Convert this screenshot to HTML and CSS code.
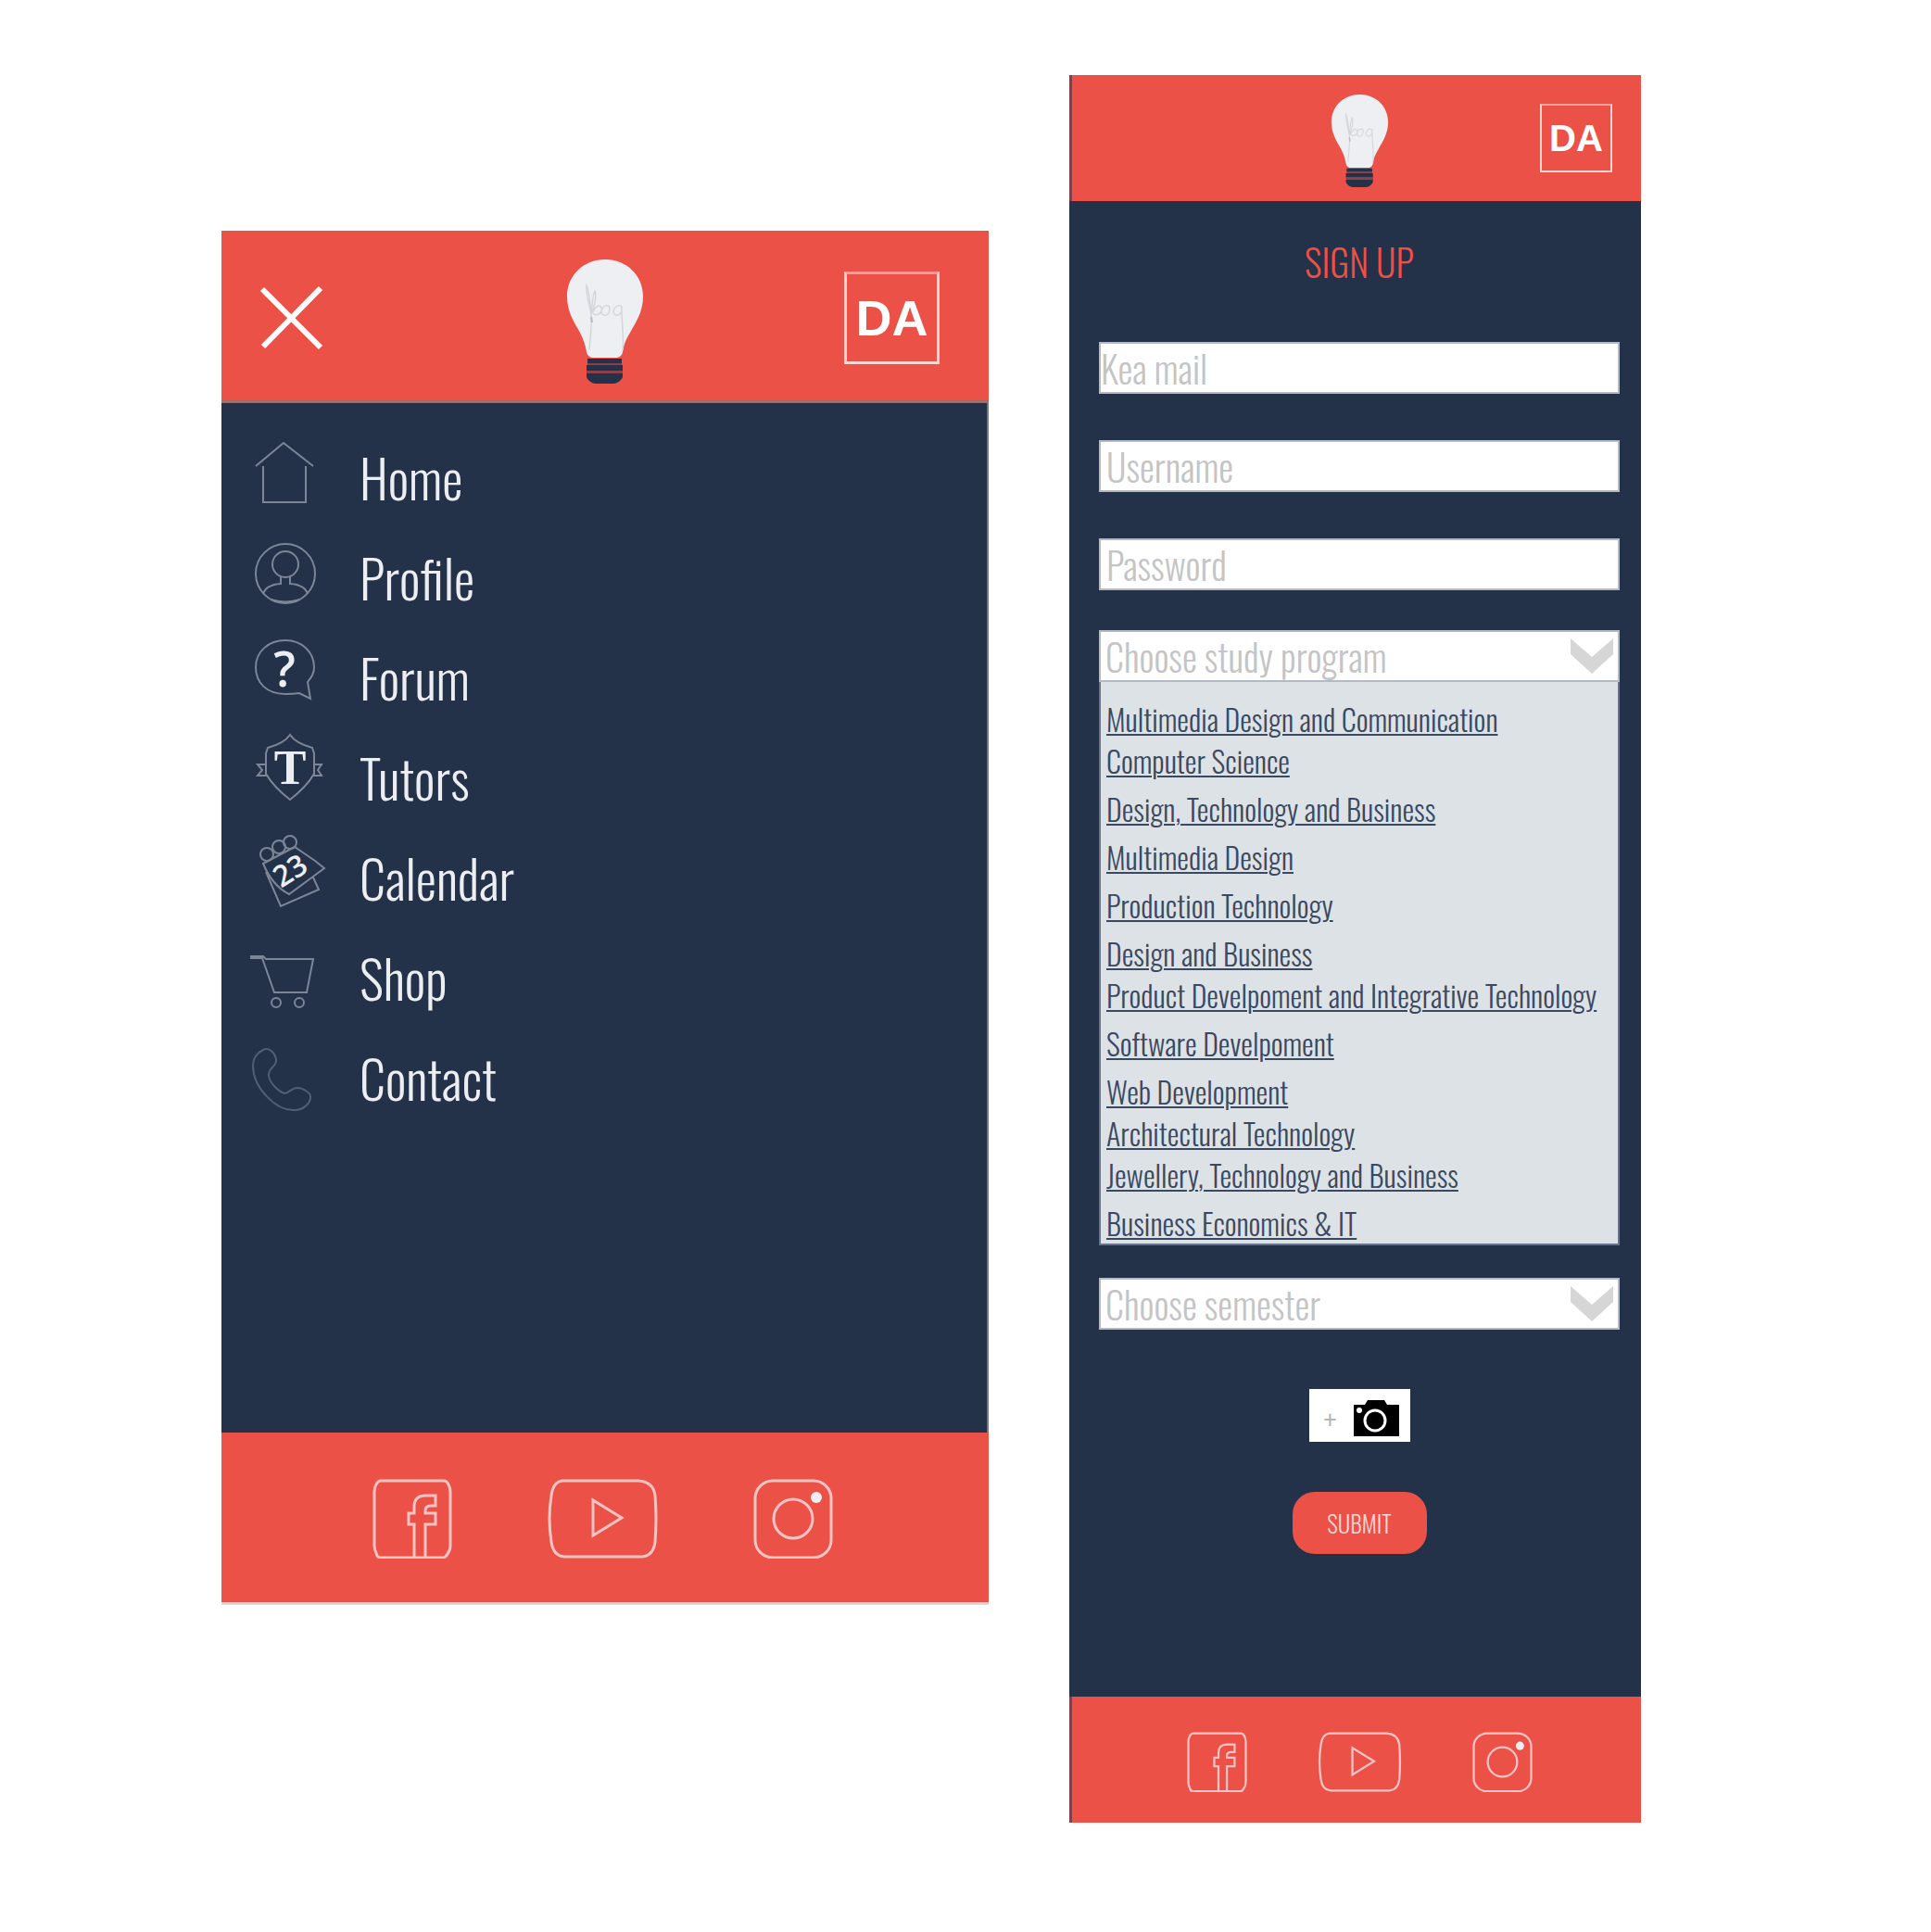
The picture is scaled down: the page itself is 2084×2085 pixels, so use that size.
FILE: index.html
```html
<!DOCTYPE html>
<html lang="en">
<head>
<meta charset="utf-8">
<meta name="viewport" content="width=device-width, initial-scale=1">
<title>Kea app</title>
<link rel="stylesheet" href="styles.css">
</head>
<body>
<svg class="sprite" aria-hidden="true">
  <symbol id="bulb" viewBox="0 0 84 134">
    <path fill="#eeeff3" d="M42 0C65 0 83 17 83 40c0 17-8 28-14 39-5 8-7 14-8 21-1 4-4 6-8 6H30c-4 0-7-2-8-6-1-7-3-13-7-21C9 68 1 57 1 40 1 17 19 0 42 0z"/>
    <path fill="none" stroke="#d3d7dd" stroke-width="1.5" d="M25 98c1-16 3-26 2-38-1-10-6-22-5-32 3 6 4 20 5 32 1-8 1-20 4-26 2 4 0 14-3 24 4-8 8-10 10-6 2 6-6 10-9 6m9-2c2-8 10-8 9-2-1 8-9 8-9 2m13 0c2-8 10-8 9-2-1 8-9 8-9 2m9-6c-1 12 3 34 1 48"/>
    <path fill="none" stroke="#b4bbc4" stroke-width="2" d="M27 62l1 6"/>
    <path fill="#233149" d="M23 107h37v5H23zM22 114h39v6H22zM22 123h39v4c-2 4-6 7-10 7H32c-4 0-8-3-10-7z"/>
    <path fill="#8c3f49" d="M23 112h37v2H23zM22 120h39v3H22z"/>
  </symbol>
  <symbol id="facebook" viewBox="0 0 86 86">
    <path d="M9 2h68q3 0 5 4 2 4 2 8v58q0 5-3 9-2 4-5 4H9q-4 0-5-5-2-4-2-8V14q0-5 2-8 2-4 5-4z"/>
    <path d="M45 84V49h-6V37h6v-7q0-12 12-12h11v11h-5q-6 0-6 5v3h11v12H57v35"/>
  </symbol>
  <symbol id="youtube" viewBox="0 0 119 86">
    <path d="M16 2h82q16 1 18 16 2 25 0 50-2 15-14 16H18Q6 83 4 68 0 43 4 18 6 3 16 2z"/>
    <path d="M49 23v38l31-19z"/>
  </symbol>
  <symbol id="instagram" viewBox="0 0 86 86">
    <rect x="2" y="2" width="82" height="83" rx="19"/>
    <circle cx="43" cy="43" r="21"/>
    <circle class="dot" cx="68" cy="20" r="6"/>
  </symbol>
  <symbol id="chevron" viewBox="0 0 46 38">
    <path fill="#d6d6d6" d="M0 0l23 20L46 0v17L23 38 0 17z"/>
  </symbol>
</svg>

<main class="board">
  <section class="screen screen-menu" aria-label="Menu">
    <header class="bar bar-top">
      <button class="close" type="button" aria-label="Close menu">
        <svg viewBox="0 0 68 68"><path d="M2 3l63 63M65 2L3 65"/></svg>
      </button>
      <svg class="bulb" role="img" aria-label="Kea"><use href="#bulb"/></svg>
      <a class="badge" href="#">DA</a>
    </header>
    <nav class="nav">
      <a class="nav-item" href="#">
        <svg viewBox="0 0 84 84"><path d="M6 30L36 5l32 25M14 30v39h46V30"/></svg>Home</a>
      <a class="nav-item" href="#">
        <svg viewBox="0 0 84 84"><circle cx="38" cy="38" r="32"/><circle cx="38" cy="28" r="14"/><path d="M33 41v8q-16 1-19 11M43 41v8q16 1 19 11M22 66q16 5 32 0"/></svg>Profile</a>
      <a class="nav-item" href="#">
        <svg viewBox="0 0 84 84"><path d="M38 2c18 0 31 13 31 29 0 7-3 11-7 16l3 18-12-6q-7 1-15 1C18 60 6 48 6 31S20 2 38 2z"/><text class="mark mark-q" x="37" y="52">?</text></svg>Forum</a>
      <a class="nav-item" href="#">
        <svg viewBox="0 0 84 84"><path d="M43-4q-6 9-24 14l-2 6v22q8 14 26 28 18-14 26-28V16l-2-6Q49 5 43-4zM17 28H8l5 6-5 6h10M69 28h8l-4 6 4 6h-9"/><text class="mark mark-t" x="43" y="49">T</text></svg>Tutors</a>
      <a class="nav-item" href="#">
        <svg viewBox="0 0 84 84"><path d="M14 27L48 9l22 15 10 8-38 28q-18-9-28-33zM17 36l16 37 41-18-6-13"/><circle cx="18" cy="17" r="7"/><circle cx="31" cy="9" r="7"/><circle cx="43" cy="4" r="7"/><text class="mark mark-n" x="49" y="44" transform="rotate(-32 49 44)">23</text></svg>Calendar</a>
      <a class="nav-item" href="#">
        <svg viewBox="0 0 84 84"><path d="M1 19h13l3 3h51l-7 36H26L13 21H1z"/><circle cx="28" cy="69" r="5"/><circle cx="53" cy="69" r="5"/></svg>Shop</a>
      <a class="nav-item nav-faint" href="#">
        <svg viewBox="0 0 84 84"><path d="M14 12c8-4 14 6 14 12s-9 8-8 16c1 7 9 16 17 19 5 0 7-6 14-6 6 0 15 6 14 10 0 7-8 14-17 14C28 78 3 53 3 29c0-8 5-14 11-17z"/></svg>Contact</a>
    </nav>
    <footer class="bar bar-social">
      <a href="#" aria-label="Facebook"><svg class="social"><use href="#facebook"/></svg></a>
      <a href="#" aria-label="YouTube"><svg class="social social-wide"><use href="#youtube"/></svg></a>
      <a href="#" aria-label="Instagram"><svg class="social"><use href="#instagram"/></svg></a>
    </footer>
  </section>

  <section class="screen screen-signup" aria-label="Sign up">
    <header class="bar bar-top">
      <span></span>
      <svg class="bulb" role="img" aria-label="Kea"><use href="#bulb"/></svg>
      <a class="badge" href="#">DA</a>
    </header>
    <form class="form">
      <h1 class="title">SIGN UP</h1>
      <input class="field field-mail" type="email" placeholder="Kea mail" aria-label="Kea mail">
      <input class="field" type="text" placeholder="Username" aria-label="Username">
      <input class="field" type="password" placeholder="Password" aria-label="Password">
      <div class="program">
        <div class="pick">
          <select class="field" aria-label="Study program"><option>Choose study program</option></select>
          <svg class="chevron" aria-hidden="true"><use href="#chevron"/></svg>
        </div>
        <ul class="options">
          <li><a href="#">Multimedia Design and Communication</a></li>
          <li class="tight"><a href="#">Computer Science</a></li>
          <li><a href="#">Design, Technology and Business</a></li>
          <li><a href="#">Multimedia Design</a></li>
          <li><a href="#">Production Technology</a></li>
          <li><a href="#">Design and Business</a></li>
          <li class="tight"><a href="#">Product Develpoment and Integrative Technology</a></li>
          <li><a href="#">Software Develpoment</a></li>
          <li><a href="#">Web Development</a></li>
          <li class="tight"><a href="#">Architectural Technology</a></li>
          <li class="tight"><a href="#">Jewellery, Technology and Business</a></li>
          <li><a href="#">Business Economics &amp; IT</a></li>
        </ul>
      </div>
      <div class="pick pick-semester">
        <select class="field" aria-label="Semester"><option>Choose semester</option></select>
        <svg class="chevron" aria-hidden="true"><use href="#chevron"/></svg>
      </div>
      <button class="photo" type="button" aria-label="Add photo">
        <span>+</span>
        <svg viewBox="0 0 49 40"><path d="M0 5h12l3-5h18l3 5h13v34H0z"/><circle cx="23" cy="22" r="11"/><circle class="flash" cx="6" cy="11" r="3"/></svg>
      </button>
      <button class="submit" type="submit">SUBMIT</button>
    </form>
    <footer class="bar bar-social">
      <a href="#" aria-label="Facebook"><svg class="social"><use href="#facebook"/></svg></a>
      <a href="#" aria-label="YouTube"><svg class="social social-wide"><use href="#youtube"/></svg></a>
      <a href="#" aria-label="Instagram"><svg class="social"><use href="#instagram"/></svg></a>
    </footer>
  </section>
</main>
</body>
</html>
```
FILE: styles.css
```css
:root {
  --red: #eb5147;
  --navy: #233149;
  --light: #eceef2;
  --grey: #c4c4c4;
}

* { box-sizing: border-box; }

body {
  margin: 0;
  background: #fff;
  font-family: "Oswald Light", Oswald, "Liberation Sans Narrow", "Open Sans Condensed", "Roboto Condensed", "Liberation Sans", sans-serif;
  font-weight: 300;
}

a { color: inherit; text-decoration: none; }
svg { display: block; overflow: visible; }
button { border: 0; padding: 0; font: inherit; cursor: pointer; }

.sprite { position: absolute; width: 0; height: 0; }

.board {
  display: grid;
  grid-template-columns: 828fr 617fr;
  align-items: start;
  gap: 87px;
  padding: 81px 313px 118px 239px;
}

.screen { background: var(--navy); }
.screen-menu { margin-top: 168px; }

/* Bars */
.bar { background: var(--red); }

.bar-top {
  display: grid;
  grid-template-columns: 1fr auto 1fr;
  align-items: center;
}

.bar-social {
  display: flex;
  justify-content: center;
  align-items: center;
}

.screen-menu .bar-top { height: 186px; padding-top: 4px; border-bottom: 3px solid #99706e; }
.screen-menu .bar-social { height: 186px; padding: 2px 6px 0 0; gap: 103px; border-bottom: 3px solid #d8d8d8; }
.screen-signup .bar-top { height: 136px; padding-left: 7px; border-left: 3px solid #84404a; }
.screen-signup .bar-social { height: 136px; padding: 4px 0 0 6px; gap: 76px; border-left: 3px solid #84404a; }

.close { margin-left: 42px; width: 68px; background: none; }
.close path { fill: none; stroke: #fff; stroke-width: 6; }

.bulb { width: 84px; height: 134px; margin-top: 8px; }
.screen-signup .bulb { width: 63px; height: 100px; margin-top: 6px; }

.badge {
  justify-self: end;
  display: grid;
  place-items: center;
  width: 103px;
  height: 100px;
  margin-right: 53px;
  border: 3px solid #fbd5d2;
  border-top-color: #f5a09a;
  color: #fff;
  font: bold 54px/1 "Liberation Sans", sans-serif;
}

.screen-signup .badge {
  width: 78px;
  height: 74px;
  margin-right: 31px;
  border-width: 2px;
  font-size: 40px;
}

.social {
  width: 86px;
  height: 86px;
  fill: none;
  stroke: #f3c4c3;
  stroke-width: 3;
}
.social-wide { width: 119px; }
.screen-signup .social { width: 65px; height: 65px; }
.screen-signup .social-wide { width: 91px; }
.dot { fill: var(--light); stroke: none; }

/* Menu */
.nav {
  display: flex;
  flex-direction: column;
  padding: 26px 0 329px 31px;
  border-right: 2px solid #73777d;
}

.nav-item {
  display: flex;
  align-items: center;
  gap: 34px;
  height: 108px;
  color: var(--light);
  font-size: 56px;
  line-height: 60px;
}

.nav-item svg {
  width: 84px;
  height: 84px;
  fill: none;
  stroke: #7c8696;
  stroke-width: 2;
}
.nav-faint svg { stroke: #525e71; }

.nav-item .mark { fill: var(--light); stroke: none; text-anchor: middle; font-weight: 600; }
.mark-q { font-family: "Open Sans", sans-serif; font-size: 52px; }
.mark-t { font-family: "Liberation Serif", serif; font-size: 52px; }
.mark-n { font-family: "Open Sans", sans-serif; font-size: 32px; }

/* Sign up */
.form {
  display: flex;
  flex-direction: column;
  align-items: center;
  padding: 40px 23px 154px 32px;
}

.title {
  margin: 0 0 62px;
  color: var(--red);
  font-size: 40px;
  font-weight: 300;
  line-height: 50px;
}

.field {
  appearance: none;
  width: 100%;
  height: 56px;
  margin: 0 0 50px;
  padding: 0 6px;
  border: 2px solid #b4bac4;
  border-radius: 0;
  background: #fff;
  color: var(--grey);
  font: inherit;
  font-size: 40px;
  line-height: 52px;
}
.field-mail { padding: 0; }
.field::placeholder { color: var(--grey); opacity: 1; }

.program { width: 100%; margin-top: -7px; }

.pick { display: grid; align-items: center; width: 100%; }
.pick .field { grid-area: 1 / 1; margin: 0; padding: 0 5px; }
.pick .chevron {
  grid-area: 1 / 1;
  justify-self: end;
  width: 46px;
  height: 38px;
  margin-right: 7px;
  pointer-events: none;
}
.pick-semester { margin: 35px 0 64px; }

.options {
  margin: 0;
  padding: 10px 6px 0;
  border: 2px solid #66738a;
  border-top: 0;
  background: #dde2e6;
  color: #3a4860;
  font-size: 32px;
  line-height: 45px;
  list-style: none;
}
.options li { margin-top: 7px; white-space: nowrap; }
.options .tight { margin-top: 0; }
.options a {
  text-decoration: underline 2px;
  text-underline-offset: 2px;
}

.photo {
  display: flex;
  align-items: center;
  justify-content: space-between;
  width: 109px;
  height: 57px;
  margin-bottom: 54px;
  padding: 6px 12px 0 16px;
  background: #fff;
  color: #b4b4b4;
  font-size: 36px;
  line-height: 40px;
}
.photo svg { width: 49px; height: 40px; fill: #000; }
.photo circle { fill: none; stroke: #fff; stroke-width: 3; }
.photo .flash { fill: #fff; stroke: none; }

.submit {
  width: 145px;
  height: 67px;
  border-radius: 24px;
  background: var(--red);
  color: #fbd9d6;
  font-size: 25px;
}
```
